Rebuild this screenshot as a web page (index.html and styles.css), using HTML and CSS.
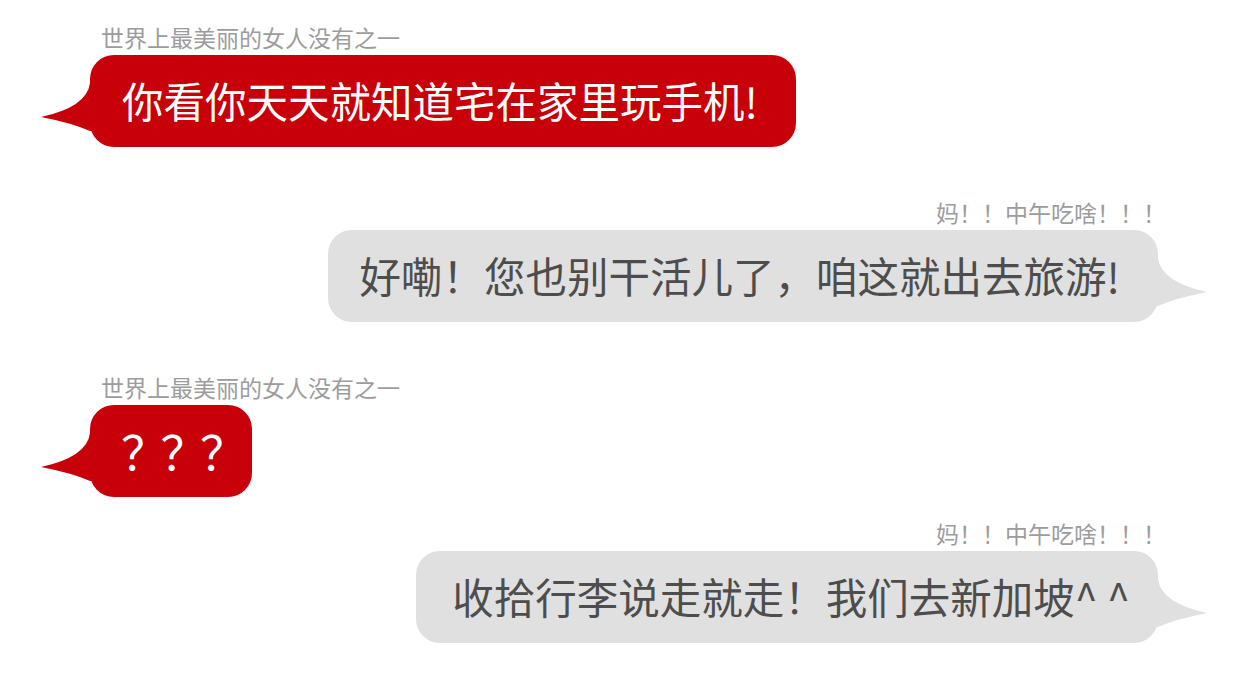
FILE: index.html
```html
<!DOCTYPE html>
<html lang="zh-CN">
<head>
  <meta charset="UTF-8">
  <title>聊天</title>
  <link rel="stylesheet" href="styles.css">
</head>
<body>
  <div class="chat">

    <div class="msg left">
      <div class="name">世界上最美丽的女人没有之一</div>
      <div class="bubble red">
        <svg class="tail" viewBox="0 0 56 60" width="56" height="60"><path d="M52 8 Q49 32 3 42 Q34 48 52 56 L56 56 L56 8 Z"/></svg>
        你看你天天就知道宅在家里玩手机!
      </div>
    </div>

    <div class="msg right">
      <div class="name">妈！！中午吃啥！！！</div>
      <div class="bubble gray">
        <svg class="tail" viewBox="0 0 56 60" width="56" height="60"><path d="M4 8 Q7 32 53 42 Q22 48 4 56 L0 56 L0 8 Z"/></svg>
        好嘞！您也别干活儿了，咱这就出去旅游!
      </div>
    </div>

    <div class="msg left">
      <div class="name">世界上最美丽的女人没有之一</div>
      <div class="bubble red short">
        <svg class="tail" viewBox="0 0 56 60" width="56" height="60"><path d="M52 8 Q49 32 3 42 Q34 48 52 56 L56 56 L56 8 Z"/></svg>
        ？？？
      </div>
    </div>

    <div class="msg right close">
      <div class="name">妈！！中午吃啥！！！</div>
      <div class="bubble gray tight">
        <svg class="tail" viewBox="0 0 56 60" width="56" height="60"><path d="M4 8 Q7 32 53 42 Q22 48 4 56 L0 56 L0 8 Z"/></svg>
        收拾行李说走就走！我们去新加坡^ ^
      </div>
    </div>

  </div>
</body>
</html>
```

FILE: styles.css
```css
body {
  margin: 0;
  background: #fff;
  font-family: "Noto Sans CJK SC", "Noto Sans", sans-serif;
}

.chat {
  display: flex;
  flex-direction: column;
  padding: 25px 84px 0 90px;
}

.msg { display: flex; flex-direction: column; }
.msg + .msg { margin-top: 53px; }
.msg.close { margin-top: 24px; }
.msg.left { align-items: flex-start; }
.msg.right { align-items: flex-end; }

.name {
  font-size: 23px;
  line-height: 24px;
  color: #9c9c9c;
  margin-bottom: 6px;
  white-space: nowrap;
}
.left .name { margin-left: 11px; }
.right .name { margin-right: -8px; }

.bubble {
  position: relative;
  height: 92px;
  line-height: 90px;
  padding: 0 38px 0 32px;
  border-radius: 24px;
  font-size: 41.5px;
  white-space: nowrap;
}
.bubble.red { background: #c70009; color: #fff; }
.bubble.gray { background: #e0e0e0; color: #4d4d4d; }
.bubble.short { padding: 0 12px 0 31px; font-size: 47px; letter-spacing: -7.5px; }
.bubble.tight { padding: 0 28px 0 36px; }

.tail {
  position: absolute;
  top: 20px;
}
.red .tail { left: -52px; fill: #c70009; }
.gray .tail { right: -52px; fill: #e0e0e0; }
```
